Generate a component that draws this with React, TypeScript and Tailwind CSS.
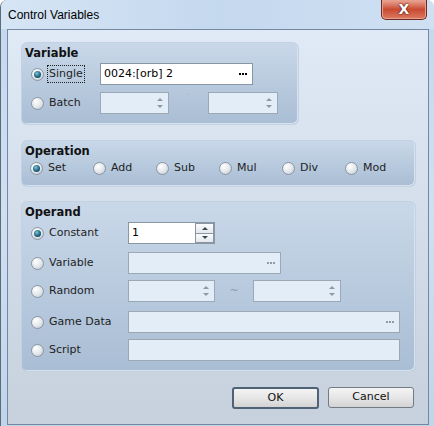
import React from 'react';

const font = { fontFamily: '"DejaVu Sans", Verdana, sans-serif' };

const Radio = ({ checked }: { checked?: boolean }) => (
  <div className="w-[13px] h-[13px] shrink-0 rounded-full border border-[#8b96a2] bg-[radial-gradient(circle_at_35%_30%,#ffffff,#e2e6ea_55%,#b9c1ca)] flex items-center justify-center">
    {checked && (
      <div className="w-[7px] h-[7px] rounded-full bg-[radial-gradient(circle_at_40%_35%,#7fc4d8,#1f6580_55%,#0f3a4c)]" />
    )}
  </div>
);

const Dots = ({ on }: { on?: boolean }) => (
  <div className="flex gap-[1px] items-center">
    {[0, 1, 2].map((i) => (
      <div key={i} className={`w-[2px] h-[2px] ${on ? 'bg-black' : 'bg-[#8e9aa7]'}`} />
    ))}
  </div>
);

const Up = ({ dark }: { dark?: boolean }) => (
  <div className={`w-0 h-0 border-x-[3px] border-x-transparent border-b-[3px] ${dark ? 'border-b-[#3d4955]' : 'border-b-[#8d99a6]'}`} />
);
const Down = ({ dark }: { dark?: boolean }) => (
  <div className={`w-0 h-0 border-x-[3px] border-x-transparent border-t-[3px] ${dark ? 'border-t-[#3d4955]' : 'border-t-[#8d99a6]'}`} />
);

const Spin = ({ w, on, value }: { w: string; on?: boolean; value?: string }) => (
  <div className={`${w} h-[22px] flex items-stretch border ${on ? 'bg-white border-[#8a96a3]' : 'bg-[#e3edf8] border-[#9ca8b5]'}`}>
    <div className="flex-1 pl-[3px] flex items-center text-[11px] text-black">{value}</div>
    {on ? (
      <div className="w-[19px] flex flex-col">
        <div className="flex-1 border border-[#8a96a3] bg-gradient-to-b from-[#fbfcfd] to-[#e4e8ec] flex items-center justify-center"><Up dark /></div>
        <div className="flex-1 border border-t-0 border-[#8a96a3] bg-gradient-to-b from-[#fbfcfd] to-[#e4e8ec] flex items-center justify-center"><Down dark /></div>
      </div>
    ) : (
      <div className="w-[16px] flex flex-col items-center justify-center gap-[4px]">
        <Up />
        <Down />
      </div>
    )}
  </div>
);

const Field = ({ w, on, value, dots }: { w: string; on?: boolean; value?: string; dots?: boolean }) => (
  <div className={`${w} h-[22px] flex items-center justify-between pl-[3px] pr-[5px] border text-[11px] text-black ${on ? 'bg-white border-[#8a96a3]' : 'bg-[#e3edf8] border-[#9ca8b5]'}`}>
    <span>{value}</span>
    {dots && <Dots on={on} />}
  </div>
);

const Group = ({ w, h, title, children }: { w: string; h: string; title: string; children: React.ReactNode }) => (
  <div className={`${w} ${h} rounded-[6px] bg-gradient-to-b from-[#c9d8e9] to-[#a9bdd4] border border-[#c3d2e3] shadow-[inset_-1px_-1px_0_#d7e2ee]`}>
    <div className="pl-[3px] pt-[3px] text-[11.5px] leading-[14px] font-bold text-[#111]">{title}</div>
    {children}
  </div>
);

const Label = ({ w, checked, text, focus }: { w: string; checked?: boolean; text: string; focus?: boolean }) => (
  <div className={`${w} flex items-center gap-[3px] text-[11px] text-[#1e1e1e]`}>
    <Radio checked={checked} />
    <span className={focus ? 'border border-dotted border-[#222] px-[1px] leading-[16px]' : 'px-[2px]'}>{text}</span>
  </div>
);

const ops = ['Set', 'Add', 'Sub', 'Mul', 'Div', 'Mod'];

export default function App() {
  return (
    <div className="w-[434px] h-[426px] overflow-hidden rounded-t-[7px] border-l border-[#5d6a78] bg-gradient-to-b from-[#c3d7ee] via-[#cfe0f2] to-[#c0d4ea]" style={font}>
      <div className="h-[29px] flex items-start justify-between bg-gradient-to-r from-[#d6e5f5] via-[#c4d8ee] to-[#cfe0f2]">
        <div className="pl-[7px] pt-[7px] text-[12px] leading-[16px] text-black" style={{ fontFamily: '"Liberation Sans", Arial, sans-serif' }}>
          Control Variables
        </div>
        <div className="mr-[7px] w-[46px] h-[20px] rounded-b-[5px] border border-t-0 border-[#6b2a22] bg-gradient-to-b from-[#eaa796] via-[#c94a31] to-[#dc7a60] shadow-[inset_0_0_0_1px_#e7a08e] flex items-center justify-center">
          <span className="text-white font-bold text-[14px] leading-none -mt-[1px]" style={{ fontFamily: '"DejaVu Sans", sans-serif', textShadow: '0 0 1px #4a1208, 0 0 2px #4a1208' }}>X</span>
        </div>
      </div>
      <div className="ml-[6px] w-[422px] h-[396px] border border-[#7489a1] bg-gradient-to-b from-[#e0eaf6] to-[#c6d1dd] pl-[13px] pt-[12px]">
        <Group w="w-[278px]" h="h-[83px]" title="Variable">
          <div className="mt-[3px] pl-[9px] flex items-center h-[22px]">
            <Label w="w-[69px]" checked focus text="Single" />
            <Field w="w-[153px]" on value="0024:[orb] 2" dots />
          </div>
          <div className="mt-[7px] pl-[9px] flex items-center h-[22px]">
            <Label w="w-[69px]" text="Batch" />
            <Spin w="w-[69px]" />
            <div className="w-[39px] text-center text-[9px] text-[#9fb0c3] -mt-[8px]">`</div>
            <Spin w="w-[70px]" />
          </div>
        </Group>

        <div className="mt-[15px]">
          <Group w="w-[395px]" h="h-[47px]" title="Operation">
            <div className="mt-[2px] pl-[8px] flex items-center h-[16px]">
              {ops.map((o, i) => (
                <Label key={o} w="w-[63px]" checked={i === 0} text={o} />
              ))}
            </div>
          </Group>
        </div>

        <div className="mt-[14px]">
          <Group w="w-[395px]" h="h-[171px]" title="Operand">
            <div className="mt-[3px] pl-[9px] flex items-center h-[22px]">
              <Label w="w-[97px]" checked text="Constant" />
              <Spin w="w-[87px]" on value="1" />
            </div>
            <div className="mt-[8px] pl-[9px] flex items-center h-[22px]">
              <Label w="w-[97px]" text="Variable" />
              <Field w="w-[153px]" dots />
            </div>
            <div className="mt-[6px] pl-[9px] flex items-center h-[22px]">
              <Label w="w-[97px]" text="Random" />
              <Spin w="w-[87px]" />
              <div className="w-[38px] text-center text-[11px] text-[#8c9aab]">~</div>
              <Spin w="w-[88px]" />
            </div>
            <div className="mt-[9px] pl-[9px] flex items-center h-[22px]">
              <Label w="w-[97px]" text="Game Data" />
              <Field w="w-[272px]" dots />
            </div>
            <div className="mt-[6px] pl-[9px] flex items-center h-[22px]">
              <Label w="w-[97px]" text="Script" />
              <Field w="w-[272px]" />
            </div>
          </Group>
        </div>

        <div className="mt-[15px] pr-[14px] flex justify-end gap-[9px]">
          <button className="w-[87px] h-[22px] rounded-[3px] border-2 border-[#4f6275] bg-gradient-to-b from-[#f4f4f4] via-[#e6e6e6] to-[#d3d3d3] text-[11px] text-[#111]">
            OK
          </button>
          <button className="w-[86px] h-[21px] rounded-[3px] border border-[#707b86] bg-gradient-to-b from-[#f4f4f4] via-[#e6e6e6] to-[#d3d3d3] text-[11px] text-[#111]">
            Cancel
          </button>
        </div>
      </div>
    </div>
  );
}
